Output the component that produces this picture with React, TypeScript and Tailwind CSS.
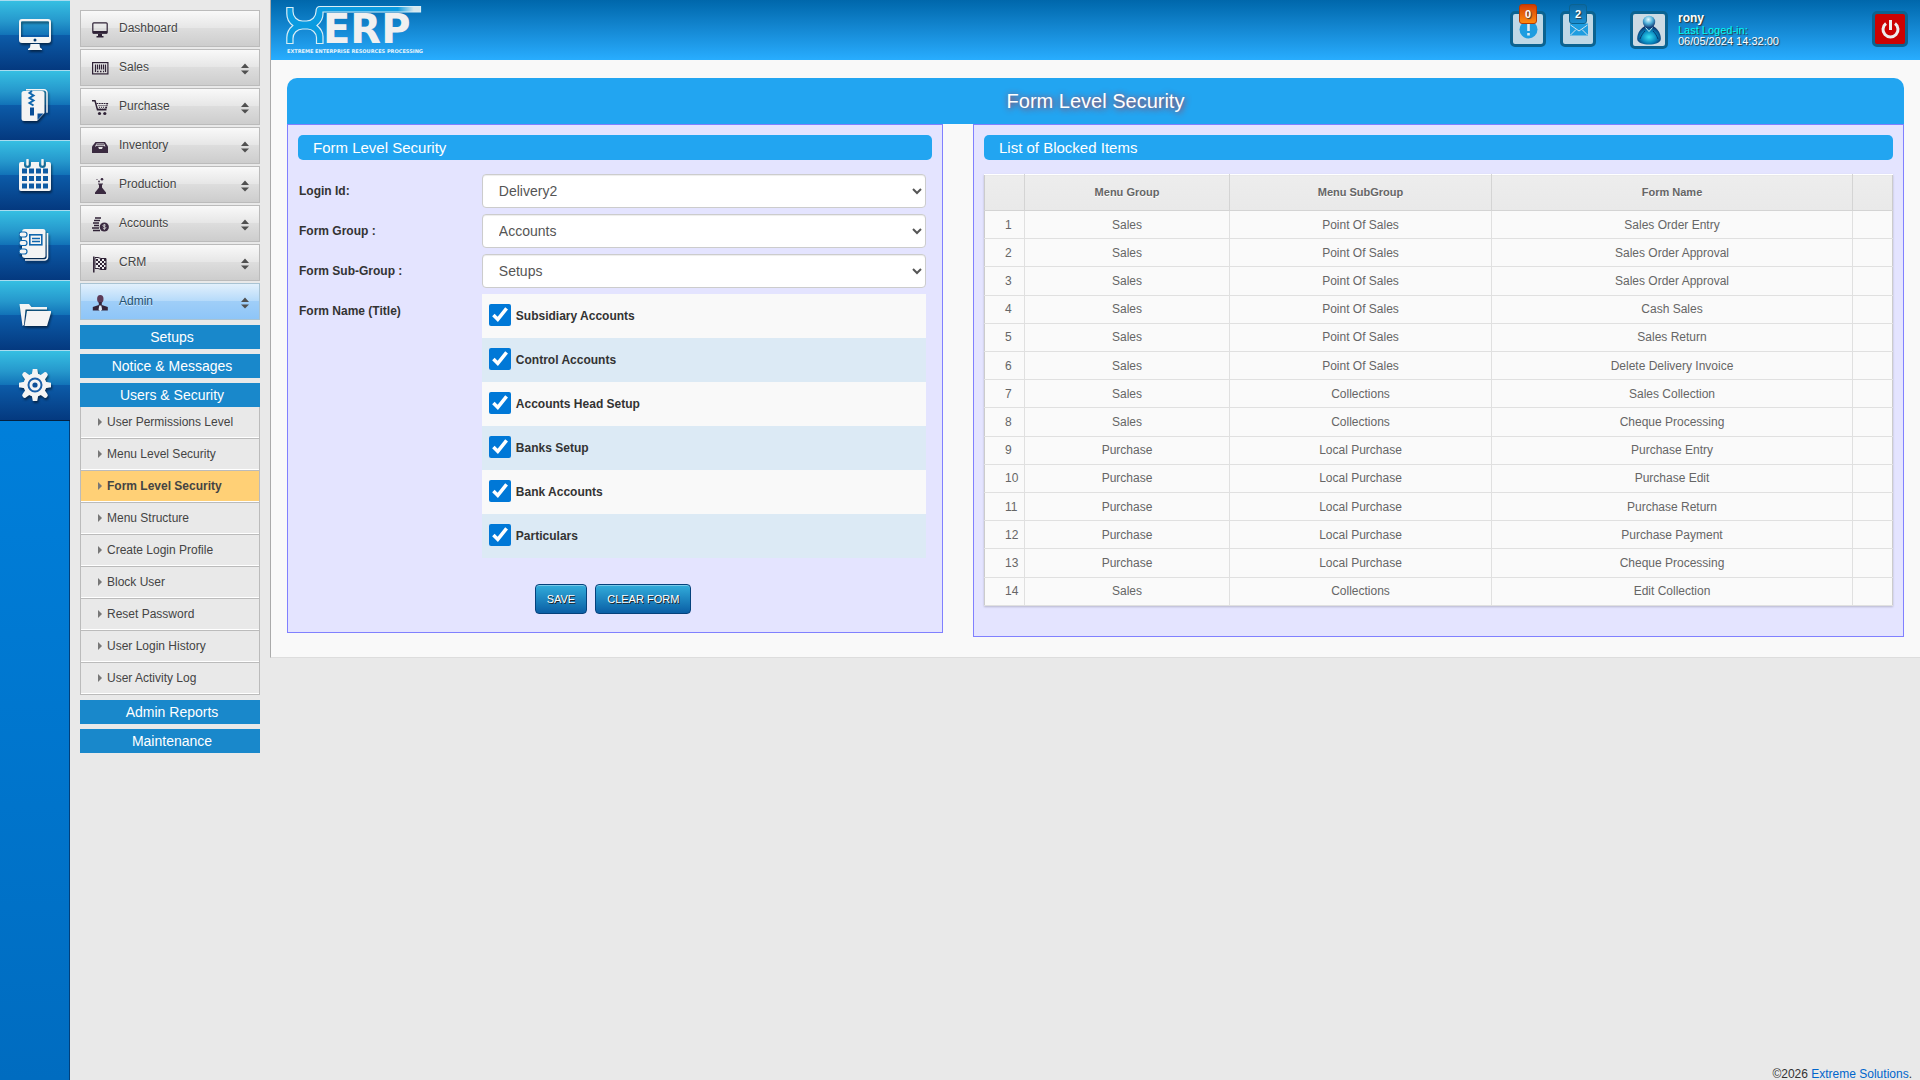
import React, { useState } from 'react';

type IconProps = { className?: string };

/* Large white icons for the left rail */

const RailMonitor = ({ className }: IconProps) => (
  <svg viewBox="0 0 32 32" className={className} fill="#f4f4f4" fillRule="evenodd">
    <path d="M3 0h26a3 3 0 0 1 3 3v18a3 3 0 0 1-3 3H3a3 3 0 0 1-3-3V3a3 3 0 0 1 3-3Zm0 2.200a1 1 0 0 0-1 1V18h28V3.200a1 1 0 0 0-1-1Zm13 17.300a1.500 1.500 0 1 0 0 3 1.500 1.500 0 0 0 0-3Z" />
    <path d="M11.500 25h9l.5 3.500 2 1.500v1H9v-1l2-1.500Z" />
  </svg>
);

const RailZip = ({ className }: IconProps) => (
  <svg viewBox="0 0 32 32" className={className}>
    <path d="M7 .8h18a3 3 0 0 1 3 3v20" fill="none" stroke="#f4f4f4" strokeWidth="1.500" />
    <path d="M5 2h18a2.500 2.500 0 0 1 2.500 2.500V24L18 32H5a2.500 2.500 0 0 1-2.500-2.500v-25A2.500 2.500 0 0 1 5 2Z" fill="#f4f4f4" />
    <path d="M13 2l-2.500 2 4 2.500-4 2.500 4 2.500-4 2.500 4 2.500" fill="none" stroke="#0f66ad" strokeWidth="2" />
    <rect x="11" y="18.500" width="4" height="8" fill="#0b4f98" />
    <path d="M18.500 31v-6.500h6Z" fill="#0b4f98" />
  </svg>
);

const RailCalendar = ({ className }: IconProps) => (
  <svg viewBox="0 0 32 32" className={className}>
    <path d="M2 3h3v2.500a3.500 3.500 0 0 0 7 0V3h8v2.500a3.500 3.500 0 0 0 7 0V3h3a2 2 0 0 1 2 2v25a2 2 0 0 1-2 2H2a2 2 0 0 1-2-2V5a2 2 0 0 1 2-2Z" fill="#f4f4f4" />
    <path d="M8.500 1v4.500M23.500 1v4.500" stroke="#f4f4f4" strokeWidth="2.500" strokeLinecap="round" />
    {[9.5, 17, 24.5].map((y) =>
      [3, 10, 17, 24].map((x) => <rect key={`${x}-${y}`} x={x} y={y} width="5" height="5" fill="#0d5aa3" />)
    )}
  </svg>
);

const RailNotebook = ({ className }: IconProps) => (
  <svg viewBox="0 0 32 32" className={className}>
    <path d="M28.500 4v24a3 3 0 0 1-3 3H6" fill="none" stroke="#f4f4f4" strokeWidth="1.600" />
    <path d="M6 0h18a2.500 2.500 0 0 1 2.500 2.500v24A2.500 2.500 0 0 1 24 29H6a3 3 0 0 1-3-3V3a3 3 0 0 1 3-3Z" fill="#f4f4f4" />
    <g fill="#f4f4f4" stroke="#0f66ad" strokeWidth="1.200">
      <rect x="0" y="3" width="8" height="5" rx="2.500" />
      <rect x="0" y="11.500" width="8" height="5" rx="2.500" />
      <rect x="0" y="20" width="8" height="5" rx="2.500" />
    </g>
    <rect x="10.800" y="5.800" width="12" height="10" fill="none" stroke="#0f66ad" strokeWidth="1.600" />
    <path d="M13 9.500h8M13 12.500h8" stroke="#0f66ad" strokeWidth="1.500" />
  </svg>
);

const RailFolder = ({ className }: IconProps) => (
  <svg viewBox="0 0 32 32" className={className}>
    <path d="M3.500 27L.5 5h9.500l2.500 3h15.500v2.500H6.500L5 26Z" fill="#f4f4f4" />
    <path d="M8 12h24.500L28 27H5.500Z" fill="#f4f4f4" />
  </svg>
);

const RailGear = ({ className }: IconProps) => (
  <svg viewBox="0 0 32 32" className={className}>
    <g fill="#f4f4f4">
      {[0, 45, 90, 135, 180, 225, 270, 315].map((a) => (
        <path key={a} d="M12.500 7l1-5.500a2.500 2.500 0 0 1 5 0l1 5.500Z" transform={`rotate(${a} 16 16)`} />
      ))}
      <circle cx="16" cy="16" r="11.500" />
    </g>
    <circle cx="16" cy="16" r="6.500" fill="none" stroke="#1a5fa8" strokeWidth="2" />
    <circle cx="16" cy="16" r="2.600" fill="#0d4f98" />
  </svg>
);

/* Small dark icons for the main menu */

const DashboardIcon = () => (
  <>
    <rect x="0.800" y="0.800" width="14.400" height="10.400" rx="1" fill="none" stroke="#2f2236" strokeWidth="1.200" />
    <path d="M1 9h14v2.500H1ZM6 12h4v2h1.500v1.500h-7V14H6Z" fill="#2f2236" />
  </>
);

const SalesIcon = () => (
  <>
    <rect x="0.600" y="1.600" width="15.300" height="11.300" fill="none" stroke="#2f2236" strokeWidth="1.200" />
    <path d="M3.500 3.500v7.500M5.500 3.500v5M7.500 3.500v5M9.500 3.500v5M11.500 3.500v5M13.500 3.500v7.500" stroke="#2f2236" strokeWidth="1.200" />
    <path d="M5 10.500h1.500M8 10.500h1.500M11 10.500h1" stroke="#2f2236" strokeWidth="1.500" />
  </>
);

const PurchaseIcon = () => (
  <>
    <path d="M0 .8h3l2.500 9h9" fill="none" stroke="#2f2236" strokeWidth="1.500" />
    <path d="M4.500 3.500h11l-1.500 5.500H6" fill="none" stroke="#2f2236" strokeWidth="1.200" strokeDasharray="1.800 .6" />
    <path d="M6.500 5.500h8M7 7.300h7" stroke="#2f2236" strokeWidth="1" strokeDasharray="1 1" />
    <circle cx="7.500" cy="13.500" r="1.600" fill="#2f2236" />
    <circle cx="12.800" cy="13.500" r="1.600" fill="#2f2236" />
  </>
);

const InventoryIcon = () => (
  <>
    <path d="M3.500 3h9.500L16 7.500v6.500H0V7.500Z" fill="#3a2a40" />
    <path d="M4.500 4.500h7.500l1.500 3h-2.500l-1 2.500h-3l-1-2.500H3Z" fill="#e6e6e6" />
    <path d="M4.500 5.800h7.500M4 7.500h8.500" stroke="#3a2a40" strokeWidth=".9" />
  </>
);

const ProductionIcon = () => (
  <>
    <path d="M6 5.500h5v1h-1v3l4 5v1.500H3v-1.500l4-5v-3H6Z" fill="#3a2a40" />
    <circle cx="10" cy="1.300" r="1.300" fill="#3a2a40" />
    <circle cx="7" cy="3.500" r=".9" fill="#3a2a40" />
    <circle cx="5" cy="1.500" r=".6" fill="#3a2a40" />
  </>
);

const AccountsIcon = () => (
  <>
    <path d="M3 1h6M2 3.500h6M1 6h6M2 8.500h5M0 11h7M1 13.500h7" stroke="#2f2236" strokeWidth="1.600" />
    <circle cx="12.300" cy="10" r="4.600" fill="#3a2a40" />
    <path d="M13.800 8.300c-.6-.7-2.900-.7-2.900.4 0 1.300 3 .7 3 2 0 1.200-2.400 1.200-3.100.3M12.300 7v6" fill="none" stroke="#ddd" strokeWidth=".8" />
  </>
);

const CrmIcon = () => (
  <>
    <path d="M1.800 .5v16" stroke="#2f2236" strokeWidth="1.500" />
    <path d="M3 1.500h3l3 1h5v11H9l-3-1H3Z" fill="#eee" stroke="#2f2236" strokeWidth="1" />
    <path d="M4 3h2v2H4Zm4 0h2v2H8Zm4 0h2v2h-2ZM6 5h2v2H6Zm4 0h2v2h-2ZM4 7h2v2H4Zm4 0h2v2H8Zm4 0h2v2h-2ZM6 9h2v2H6Zm4 0h2v2h-2ZM8 11h2v2H8Zm4 0h2v2h-2Z" fill="#2f2236" />
  </>
);

const AdminIcon = () => (
  <>
    <ellipse cx="8.300" cy="4" rx="3.200" ry="3.900" fill="#5d3a57" />
    <path d="M6.800 7h3v3l6 2v3.500H.8V12l6-2Z" fill="#33243a" />
    <path d="M7.300 10.500h2l.8 4-1.800 2-1.800-2Z" fill="#dceaf8" />
  </>
);

const railItems = [
  { name: 'Desktop', icon: RailMonitor },
  { name: 'Archive', icon: RailZip },
  { name: 'Calendar', icon: RailCalendar },
  { name: 'Notebook', icon: RailNotebook },
  { name: 'Files', icon: RailFolder },
  { name: 'Settings', icon: RailGear },
];

const menuItems = [
  { name: 'Dashboard', icon: DashboardIcon, expandable: false },
  { name: 'Sales', icon: SalesIcon, expandable: true },
  { name: 'Purchase', icon: PurchaseIcon, expandable: true },
  { name: 'Inventory', icon: InventoryIcon, expandable: true },
  { name: 'Production', icon: ProductionIcon, expandable: true },
  { name: 'Accounts', icon: AccountsIcon, expandable: true },
  { name: 'CRM', icon: CrmIcon, expandable: true },
  { name: 'Admin', icon: AdminIcon, expandable: true },
];

const securityLinks = [
  'User Permissions Level',
  'Menu Level Security',
  'Form Level Security',
  'Menu Structure',
  'Create Login Profile',
  'Block User',
  'Reset Password',
  'User Login History',
  'User Activity Log',
];

const formNames = [
  'Subsidiary Accounts',
  'Control Accounts',
  'Accounts Head Setup',
  'Banks Setup',
  'Bank Accounts',
  'Particulars',
];

const blockedItems = [
  ['Sales', 'Point Of Sales', 'Sales Order Entry'],
  ['Sales', 'Point Of Sales', 'Sales Order Approval'],
  ['Sales', 'Point Of Sales', 'Sales Order Approval'],
  ['Sales', 'Point Of Sales', 'Cash Sales'],
  ['Sales', 'Point Of Sales', 'Sales Return'],
  ['Sales', 'Point Of Sales', 'Delete Delivery Invoice'],
  ['Sales', 'Collections', 'Sales Collection'],
  ['Sales', 'Collections', 'Cheque Processing'],
  ['Purchase', 'Local Purchase', 'Purchase Entry'],
  ['Purchase', 'Local Purchase', 'Purchase Edit'],
  ['Purchase', 'Local Purchase', 'Purchase Return'],
  ['Purchase', 'Local Purchase', 'Purchase Payment'],
  ['Purchase', 'Local Purchase', 'Cheque Processing'],
  ['Sales', 'Collections', 'Edit Collection'],
];

function IconRail() {
  return (
    <nav aria-label="Shortcuts" className="w-[70px] shrink-0 border-r border-[#00407c] bg-linear-to-b from-[#008cec] to-[#006cc0]">
      <div className="-mr-px border-b border-[#04203f]">
        {railItems.map((item) => {
          const Icon = item.icon;
          return (
            <a
              key={item.name}
              href="#"
              aria-label={item.name}
              className="flex h-[70px] items-center justify-center border-t border-[#a9dcf0] bg-[linear-gradient(#36bfe2_0%,#2597cc_30%,#1273b8_49%,#0c5ba8_50%,#04397f_100%)] pb-0.5"
            >
              <Icon className="h-8 w-8 drop-shadow-[1px_2px_1px_rgba(0,0,0,0.5)]" />
            </a>
          );
        })}
      </div>
    </nav>
  );
}

function SubHeading({ children }: { children: React.ReactNode }) {
  return (
    <button className="block h-6 w-full bg-[#1988cb] pl-1 text-center text-sm leading-6 text-white">
      {children}
    </button>
  );
}

function Sidebar() {
  return (
    <aside className="w-[200px] shrink-0 px-2.5 pt-2.5 text-xs text-[#444]">
      <div className="flex flex-col gap-0.5">
        {menuItems.map((item) => {
          const Icon = item.icon;
          const isActive = item.name === 'Admin';
          return (
            <button
              key={item.name}
              className={`flex h-[37px] items-center border pr-2.5 pl-[11px] text-left ${
                isActive
                  ? 'border-[#a9c3d3] bg-[linear-gradient(#e2f0fc_0%,#b5dafa_49%,#9fcef8_50%,#8ec5f8_100%)] text-[#23506f]'
                  : 'border-[#bbb] bg-[linear-gradient(#f9f9f9_0%,#e6e6e6_49%,#dddddd_50%,#cdcdcd_100%)]'
              }`}
            >
              <svg viewBox="0 0 17 17" className="mt-1 mr-2.5 h-[17px] w-[17px]">
                <Icon />
              </svg>
              <span className="mb-0.5 flex-1 [text-shadow:0_1px_0_rgba(255,255,255,0.6)]">{item.name}</span>
              {item.expandable && (
                <svg viewBox="0 0 8 12" className="mt-0.5 h-3 w-2" fill="#505050">
                  <path d="M4 .5L8 5H0ZM0 7.500h8l-4 4Z" />
                </svg>
              )}
            </button>
          );
        })}
      </div>

      <div className="mt-[5px] flex flex-col gap-[5px]">
        <SubHeading>Setups</SubHeading>
        <SubHeading>Notice &amp; Messages</SubHeading>
        <div>
          <SubHeading>Users &amp; Security</SubHeading>
          <ul className="border-x border-[#bbb]">
            {securityLinks.map((name) => (
              <li key={name} className="h-8 border-b border-[#bbb]">
                <a
                  href="#"
                  className={`flex h-[31px] items-center gap-[5px] border-b border-white pl-[17px] ${
                    name === 'Form Level Security' ? 'bg-[#ffd076] font-bold' : ''
                  }`}
                >
                  <svg viewBox="0 0 4 8" className="h-2 w-1" fill="#777">
                    <path d="M0 0l4 4-4 4Z" />
                  </svg>
                  {name}
                </a>
              </li>
            ))}
          </ul>
        </div>
        <SubHeading>Admin Reports</SubHeading>
        <SubHeading>Maintenance</SubHeading>
      </div>
    </aside>
  );
}

function Logo() {
  return (
    <a href="#" aria-label="XERP home">
      <svg viewBox="0 0 146 52" className="h-[52px] w-[146px]">
        <defs>
          <linearGradient id="swoosh" x1="0" x2="1">
            <stop offset="0" stopColor="#0a9be0" />
            <stop offset="0.83" stopColor="#0a9be0" />
            <stop offset="0.95" stopColor="#d5e6ec" />
          </linearGradient>
        </defs>
        {/* crossed mark whose arm runs out over the letters */}
        <path
          d="M.8 3.500H7v4a9.500 9.500 0 0 0 9.500 9.500h4A9.500 9.500 0 0 0 30 7.500c0-3 1-5 4-5h100.500V8H37v2c0 6-3 9-6 11.500 3 2.500 6 5.500 6 11v7h-6.500v-6a9 9 0 0 0-9-8.500h-5A9.500 9.500 0 0 0 7 34.500v5H.8v-6c0-6 2.500-9 6-12-3.500-2.500-6-6-6-12Z"
          fill="url(#swoosh)"
          stroke="#d8edf6"
          strokeWidth="1.200"
        />
        <text x="37" y="39" fontFamily="DejaVu Sans" fontWeight="700" fontSize="40" fill="#f0f0f0">ERP</text>
        <text x="1" y="49" fontFamily="DejaVu Sans" fontWeight="700" fontSize="5" fill="#e6f4fb">
          EXTREME ENTERPRISE RESOURCES PROCESSING
        </text>
      </svg>
    </a>
  );
}

function TopBar() {
  return (
    <header className="flex h-[60px] items-start bg-linear-to-b from-[#0067ab] to-[#28adff] pl-[15px] pr-3">
      <div className="pt-1">
        <Logo />
      </div>

      <div className="ml-auto flex pt-[11px]">
        <button aria-label="Alerts" className="relative mr-3.5 h-9 w-9 rounded-[5px] border-[3px] border-[#0b6391] bg-[#bfd8e6]">
          <svg viewBox="0 0 30 30" className="h-full w-full">
            <circle cx="15.500" cy="15.500" r="9" fill="#1e9de0" />
            <path d="M15.500 8v9M15.500 19v2.500" stroke="#dcebf3" strokeWidth="2.600" />
          </svg>
          <span className="absolute -top-2.5 left-1.5 flex h-5 w-[18px] items-center justify-center rounded-[3px] border border-[#b83c00] bg-linear-to-b from-[#d23c05] to-[#ff8a10] text-[11px] font-bold text-white [text-shadow:1px_1px_1px_#333]">
            0
          </span>
        </button>
        <button aria-label="Messages" className="relative mr-[34px] h-9 w-9 rounded-[5px] border-[3px] border-[#0b6391] bg-[#bfd8e6]">
          <svg viewBox="0 0 30 30" className="h-full w-full">
            <rect x="7" y="9.500" width="18" height="12" fill="#1e9de0" />
            <path d="M7.500 11l8.500 6 8.500-6M7.500 21l5.500-5.500M24.500 21L19 15.500" fill="none" stroke="#cfe2ee" strokeWidth="1" />
          </svg>
          <span className="absolute -top-2.5 left-1.5 flex h-5 w-[18px] items-center justify-center rounded-[3px] border border-[#0b6391] bg-linear-to-b from-[#0a68a5] to-[#1c8fd2] text-[11px] font-bold text-white [text-shadow:1px_1px_1px_#333]">
            2
          </span>
        </button>
        <div className="mr-2.5 h-[38px] w-[38px] rounded-[5px] border-[3px] border-[#0b6391] bg-[#ccdbe4]">
          <svg viewBox="0 0 32 32" className="h-full w-full">
            <defs>
              <radialGradient id="avatar-body" cx="0.5" cy="0.6" r="0.6">
                <stop offset="0" stopColor="#38e0f2" />
                <stop offset="0.55" stopColor="#0785bd" />
                <stop offset="1" stopColor="#0c2660" />
              </radialGradient>
              <radialGradient id="avatar-head" cx="0.45" cy="0.3" r="0.7">
                <stop offset="0" stopColor="#e8fbff" />
                <stop offset="0.5" stopColor="#4fb0da" />
                <stop offset="1" stopColor="#0c2f6b" />
              </radialGradient>
            </defs>
            <path d="M12 12C8 14 4 19 4.200 25c.3 4 6 5.500 11.800 5.500s11.500-1.500 11.800-5.500c.2-6-3.800-11-7.800-13Z" fill="url(#avatar-body)" />
            <path d="M12.500 13.500l3.500 4 3.500-4" stroke="#bdf3fb" strokeWidth="1" fill="none" />
            <path d="M7 25c1.500-4 3-6 5-8M25 25c-1.500-4-3-6-5-8" stroke="#063a70" strokeWidth="1" fill="none" />
            <circle cx="16" cy="8" r="6.200" fill="url(#avatar-head)" />
          </svg>
        </div>
        <div className="w-[194px] text-[11px] leading-[11px] text-white [text-shadow:1px_1px_1px_#333]">
          <p className="text-xs leading-[14px] font-bold">rony</p>
          <p className="text-[#00fff6]">Last Loged-in:</p>
          <p>06/05/2024 14:32:00</p>
        </div>
        <button aria-label="Log out" className="h-9 w-9 rounded-[5px] border-[3px] border-[#0b6391] bg-[#cc0202]">
          <svg viewBox="0 0 30 30" className="h-full w-full" fill="none" stroke="#eee" strokeWidth="3">
            <path d="M11 9.500a7.500 7.500 0 1 0 9 0" />
            <path d="M15.500 6v10" />
          </svg>
        </button>
      </div>
    </header>
  );
}

function Panel({ title, children }: { title: string; children: React.ReactNode }) {
  return (
    <section className="border border-[#8080ff] bg-[#e4e4ff] px-2.5 pt-2.5">
      <h3 className="mb-3.5 h-[25px] rounded-[5px] bg-[#22a5f1] px-[15px] text-[15px] leading-[25px] text-white">{title}</h3>
      {children}
    </section>
  );
}

function SelectRow({ id, label, value }: { id: string; label: string; value: string }) {
  return (
    <div className="mb-1.5 flex items-center">
      <label htmlFor={id} className="w-[29%] pl-px text-xs font-bold text-[#333]">
        {label}
      </label>
      <select
        id={id}
        defaultValue={value}
        className="h-[34px] w-[70%] rounded-[4px] border border-[#ccc] bg-white px-3 text-sm text-[#555] shadow-[inset_0_1px_1px_rgba(0,0,0,0.075)]"
      >
        <option>{value}</option>
      </select>
    </div>
  );
}

const buttonStyle =
  'h-[30px] rounded-[4px] border border-[#05427c] bg-linear-to-b from-[#33addb] to-[#0b5fa5] px-[11px] text-[11px] uppercase text-white shadow-[inset_0_1px_0_rgba(255,255,255,0.35)] [text-shadow:1px_1px_0_#222]';

function SecurityForm() {
  const [checked, setChecked] = useState<string[]>(formNames);

  const toggle = (name: string) => {
    setChecked(checked.includes(name) ? checked.filter((n) => n !== name) : [...checked, name]);
  };

  return (
    <form onSubmit={(e) => e.preventDefault()}>
      <SelectRow id="login-id" label="Login Id:" value="Delivery2" />
      <SelectRow id="form-group" label="Form Group :" value="Accounts" />
      <SelectRow id="form-subgroup" label="Form Sub-Group :" value="Setups" />
      <fieldset className="flex items-start text-xs font-bold text-[#333]" aria-labelledby="form-name-label">
        <span id="form-name-label" className="w-[29%] pl-px leading-[34px]">
          Form Name (Title)
        </span>
        <div className="w-[70%]">
          {formNames.map((name) => (
            <label key={name} className="flex h-11 items-center gap-[5px] bg-[#f9f9f9] px-[7px] even:bg-[#dceaf5]">
              <input
                type="checkbox"
                checked={checked.includes(name)}
                onChange={() => toggle(name)}
                className="mb-0.5 h-[22px] w-[22px] accent-[#0078d7]"
              />
              {name}
            </label>
          ))}
        </div>
      </fieldset>
      <div className="flex justify-center gap-2 pt-[26px] pr-1 pb-[18px]">
        <button type="submit" className={buttonStyle}>Save</button>
        <button type="reset" className={buttonStyle}>Clear Form</button>
      </div>
    </form>
  );
}

function BlockedItems() {
  return (
    <table className="mb-[30px] h-[432px] w-full table-fixed border-collapse border border-[#ccc] bg-[#fafafa] text-center text-xs text-[#666] shadow-[0_1px_2px_rgba(0,0,0,0.2)]">
      <colgroup>
        <col className="w-10" />
        <col className="w-[205px]" />
        <col className="w-[262px]" />
        <col />
        <col className="w-10" />
      </colgroup>
      <thead>
        <tr className="h-9 border-t border-white bg-linear-to-b from-[#ededed] to-[#e9e9e9] text-[11px] [text-shadow:0_1px_0_#fff]">
          <th className="border-r border-b border-[#d4d4d4]" />
          <th className="border-r border-b border-[#d4d4d4]">Menu Group</th>
          <th className="border-r border-b border-[#d4d4d4]">Menu SubGroup</th>
          <th className="border-r border-b border-[#d4d4d4]">Form Name</th>
          <th className="border-b border-[#d4d4d4]" />
        </tr>
      </thead>
      <tbody>
        {blockedItems.map(([group, subGroup, form], i) => (
          <tr key={i}>
            <td className="border-r border-b border-[#e0e0e0] pl-5 text-left">{i + 1}</td>
            <td className="border-r border-b border-[#e0e0e0]">{group}</td>
            <td className="border-r border-b border-[#e0e0e0]">{subGroup}</td>
            <td className="border-r border-b border-[#e0e0e0]">{form}</td>
            <td className="border-b border-[#e0e0e0]" />
          </tr>
        ))}
      </tbody>
    </table>
  );
}

export default function App() {
  return (
    <div className="flex min-h-screen bg-[#e9e9e9] font-['Liberation_Sans',Arial,sans-serif]">
      <IconRail />
      <Sidebar />
      <div className="flex min-w-0 flex-1 flex-col">
        <div className="border-b border-l border-b-[#ddd] border-l-[#aaa] bg-[#f9f9f9]">
          <TopBar />
          <main className="px-4 pt-[18px] pb-5">
            <h2 className="h-[46px] rounded-t-[10px] bg-[#22a5f1] text-center text-xl leading-[46px] text-white [text-shadow:1px_1px_6px_#d02020]">
              Form Level Security
            </h2>
            <div className="grid grid-cols-[656fr_931fr] items-start gap-[30px]">
              <Panel title="Form Level Security">
                <SecurityForm />
              </Panel>
              <Panel title="List of Blocked Items">
                <BlockedItems />
              </Panel>
            </div>
          </main>
        </div>
        <footer className="mt-auto pr-2 text-right text-xs leading-3 text-[#333]">
          ©2026 <a href="#" className="text-[#06c]">Extreme Solutions</a>.
        </footer>
      </div>
    </div>
  );
}
